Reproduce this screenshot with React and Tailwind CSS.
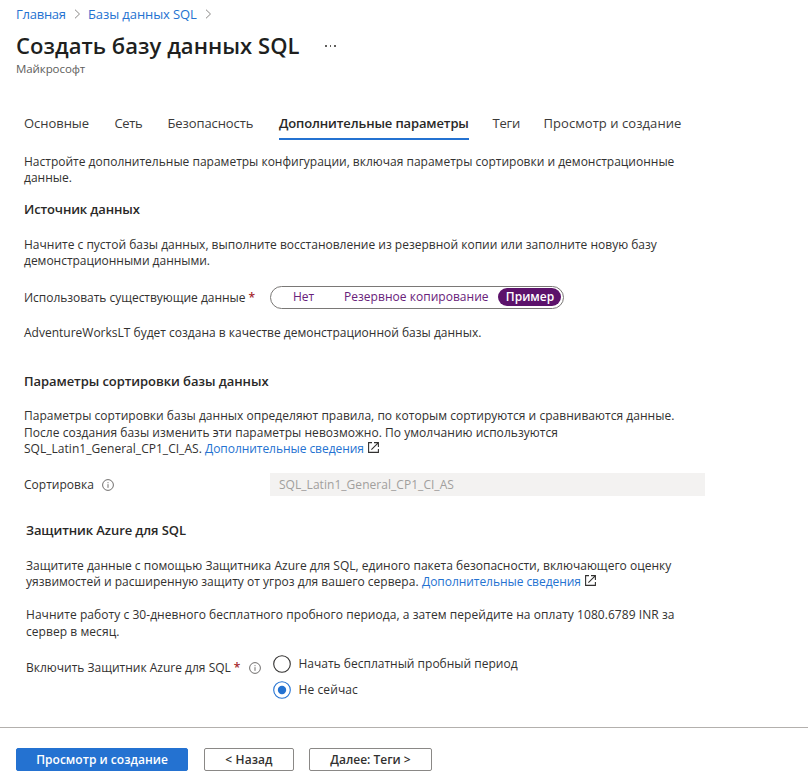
const Chevron = ({ className }) => (
  <svg className={className} width="7" height="10" viewBox="0 0 7 10" fill="none" stroke="#8a8886" strokeWidth="1">
    <path d="M1 .7 5.5 5 1 9.3" />
  </svg>
);

const Info = ({ className }) => (
  <svg className={className} width="12" height="12" viewBox="0 0 12 12" fill="none" stroke="#605e5c" strokeWidth="0.9">
    <circle cx="6" cy="6" r="5.4" />
    <path d="M6 5.2v3.6M6 3.2v1" />
  </svg>
);

const External = () => (
  <svg className="ml-[4px] mt-[2px] shrink-0" width="11" height="11" viewBox="0 0 11 11" fill="none" stroke="#323130" strokeWidth="1.1">
    <path d="M4 .6H.6v9.8h9.8V7" />
    <path d="M6 .6h4.4V5M10.2.8 3.4 7.6" />
  </svg>
);

const Radio = ({ checked }) => (
  <svg width="18" height="18" viewBox="0 0 18 18" fill="none" className="shrink-0">
    <circle cx="9" cy="9" r="8.3" stroke={checked ? "#2472d1" : "#323130"} strokeWidth="1.1" />
    {checked && <circle cx="9" cy="9" r="4.2" fill="#2472d1" />}
  </svg>
);

const link = "text-[#2472d1]";
const row = "flex h-[17px] leading-[17px]";
const heading = "h-[18px] text-[13px] leading-[18px] font-semibold text-[#292827]";

export default function App() {
  return (
    <div className="flex h-[781px] w-[808px] flex-col overflow-hidden bg-white font-['Open_Sans','Noto_Sans',sans-serif] text-[12px] whitespace-nowrap text-[#323130]">
      <header className="pl-[16px]">
        <nav className="mt-[5px] flex h-[18px] items-center text-[13px] leading-[18px]">
          <a className={`${link} w-[50px] tracking-[-0.25px]`}>Главная</a>
          <Chevron className="mx-[8px]" />
          <a className={`${link} ml-[-1px] w-[109px] tracking-[-0.09px]`}>Базы данных SQL</a>
          <Chevron className="ml-[8px]" />
        </nav>
        <div className="mt-[7px] flex h-[30px] items-center">
          <h1 className="w-[309px] text-[22px] leading-[30px] font-semibold tracking-[0.05px] text-[#201f1e]">Создать базу данных SQL</h1>
          <div className="mt-[2px] flex gap-[3px]">
            <i className="size-[1.5px] bg-[#605e5c]" />
            <i className="size-[1.5px] bg-[#605e5c]" />
            <i className="size-[1.5px] bg-[#605e5c]" />
          </div>
        </div>
        <p className="mt-[1px] h-[16px] text-[11.5px] leading-[16px] tracking-[-0.08px] text-[#605e5c]">Майкрософт</p>
      </header>

      <div className="mt-[33px] flex h-[30px] pl-[24px] text-[13px] leading-[26px] text-[#3b3a39]">
        <span className="w-[90.5px] tracking-[-0.04px]">Основные</span>
        <span className="w-[53px] tracking-[-0.4px]">Сеть</span>
        <span className="w-[111.5px] tracking-[-0.1px]">Безопасность</span>
        <span className="w-[190px] border-b-2 border-[#2472d1] font-semibold tracking-[-0.13px] text-[#292827]">Дополнительные параметры</span>
        <span className="ml-[23.5px] w-[51px] tracking-[-0.2px]">Теги</span>
        <span className="tracking-[0.06px]">Просмотр и создание</span>
      </div>

      <main className="pl-[24px]">
        <section>
          <div className="mt-[13px]">
            <p className={row}>Настройте дополнительные параметры конфигурации, включая параметры сортировки и демонстрационные</p>
            <p className={`${row} mt-[-1px]`}>данные.</p>
          </div>
          <h2 className={`${heading} mt-[14px] tracking-[-0.13px]`}>Источник данных</h2>
          <div className="mt-[18px]">
            <p className={row}>Начните с пустой базы данных, выполните восстановление из резервной копии или заполните новую базу</p>
            <p className={`${row} mt-[-1px] tracking-[-0.02px]`}>демонстрационными данными.</p>
          </div>
          <div className="mt-[16px] flex h-[24px] items-center">
            <div className="flex w-[246px] leading-[17px] tracking-[-0.03px]">
              Использовать существующие данные<span className="ml-[3px] font-semibold text-[#a4262c]">*</span>
            </div>
            <div className="flex h-[23px] w-[294px] items-center rounded-full border border-[#7a7876] pr-[2px] leading-[18px] text-[#68217a]">
              <span className="w-[73px] pl-[22px]">Нет</span>
              <span className="w-[154px] tracking-[0.03px]">Резервное копирование</span>
              <span className="h-[18px] w-[63px] rounded-full bg-[#5c126b] pl-[1px] text-center font-semibold text-white">Пример</span>
            </div>
          </div>
          <p className={`${row} mt-[15px]`}>AdventureWorksLT будет создана в качестве демонстрационной базы данных.</p>
        </section>

        <section>
          <h2 className={`${heading} mt-[31px] tracking-[-0.07px]`}>Параметры сортировки базы данных</h2>
          <div className="mt-[17px]">
            <p className={`${row} tracking-[0.028px]`}>Параметры сортировки базы данных определяют правила, по которым сортируются и сравниваются данные.</p>
            <p className={`${row} tracking-[0.034px]`}>После создания базы изменить эти параметры невозможно. По умолчанию используются</p>
            <p className={`${row} mt-[-1px]`}>
              <span className="w-[181px] tracking-[0.03px]">SQL_Latin1_General_CP1_CI_AS.</span>
              <a className={`${link} tracking-[-0.05px]`}>Дополнительные сведения</a>
              <External />
            </p>
          </div>
          <div className="mt-[16px] flex h-[23px] items-center">
            <div className="flex w-[246px] items-center leading-[17px] tracking-[0.02px]">
              Сортировка
              <Info className="ml-[8px]" />
            </div>
            <div className="h-[23px] w-[435px] bg-[#f3f2f1] pl-[9px] leading-[23px] tracking-[0.04px] text-[#a19f9d]">SQL_Latin1_General_CP1_CI_AS</div>
          </div>
        </section>

        <section className="pl-[2px]">
          <h2 className={`${heading} mt-[25px] tracking-[-0.1px]`}>Защитник Azure для SQL</h2>
          <p className={`${row} mt-[18px] tracking-[0.01px]`}>Защитите данные с помощью Защитника Azure для SQL, единого пакета безопасности, включающего оценку</p>
          <p className={`${row} mt-[-1px] tracking-[0.01px]`}>
            <span className="w-[396px]">уязвимостей и расширенную защиту от угроз для вашего сервера.</span>
            <a className={`${link} tracking-[-0.05px]`}>Дополнительные сведения</a>
            <External />
          </p>
          <p className={`${row} mt-[16px] tracking-[0.052px]`}>Начните работу с 30-дневного бесплатного пробного периода, а затем перейдите на оплату 1080.6789 INR за</p>
          <p className={`${row} tracking-[0.06px]`}>сервер в месяц.</p>
          <div className="mt-[15px] flex">
            <div className="mt-[4px] flex h-[17px] w-[247px] items-center leading-[17px]">
              Включить Защитник Azure для SQL<span className="ml-[3px] font-semibold text-[#a4262c]">*</span>
              <Info className="ml-[9px]" />
            </div>
            <div className="flex flex-col gap-[8px]">
              <label className="flex h-[18px] items-center gap-[7.5px]">
                <Radio />
                Начать бесплатный пробный период
              </label>
              <label className="flex h-[18px] items-center gap-[7.5px] tracking-[0.1px]">
                <Radio checked />
                Не сейчас
              </label>
            </div>
          </div>
        </section>
      </main>

      <footer className="mt-[28px] flex border-t border-[#b3b0ad] pt-[20px] pl-[16px] text-center font-semibold leading-[21px]">
        <button className="h-[23px] w-[172px] rounded-[2px] border border-[#2472d1] bg-[#2472d1] tracking-[0.03px] text-white">Просмотр и создание</button>
        <button className="ml-[16px] h-[23px] w-[90px] rounded-[2px] border border-[#8a8886] tracking-[0.1px]">&lt; Назад</button>
        <button className="ml-[15px] h-[23px] w-[123px] rounded-[2px] border border-[#8a8886]">Далее: Теги &gt;</button>
      </footer>
    </div>
  );
}
